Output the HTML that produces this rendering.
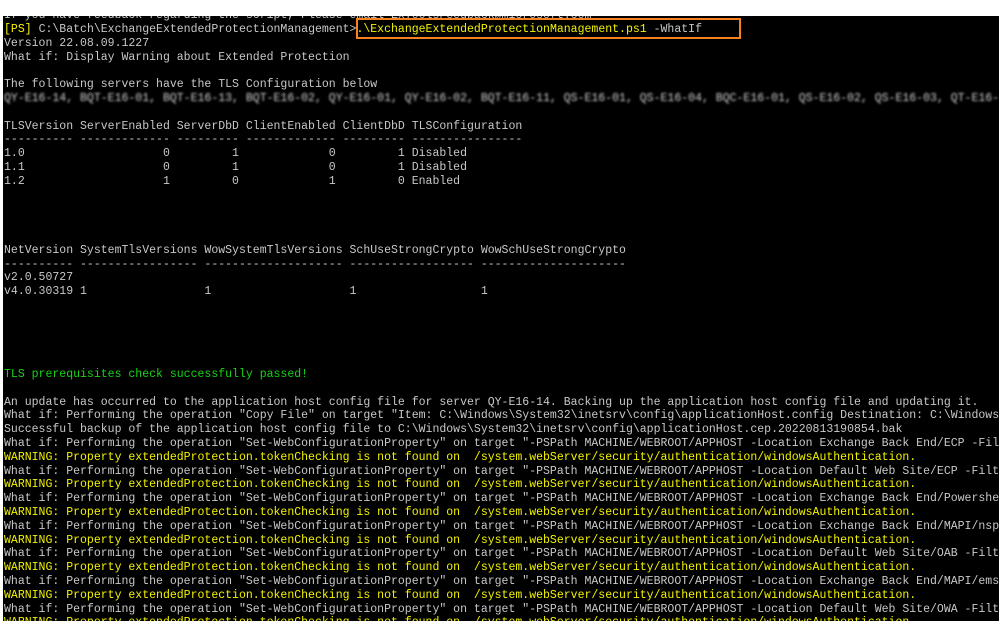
<!DOCTYPE html>
<html><head><meta charset="utf-8"><style>
html,body{margin:0;padding:0;background:#fff;width:999px;height:621px;overflow:hidden;}
#con{position:absolute;left:3px;top:16px;width:996px;height:605px;background:#000;overflow:hidden;}
pre{margin:0;position:absolute;left:1px;top:-6.7px;font-family:"Liberation Mono",monospace;font-size:11.52px;line-height:13.8px;color:#c8c8c8;white-space:pre;}
.y{color:#f2f200}.g{color:#16d416}
.b{filter:blur(1.1px);color:#d0d0d0}
#box{position:absolute;left:356px;top:18px;width:381px;height:17px;border:2px solid #f5821f;box-sizing:content-box;}
</style></head><body>
<div id="con"><pre>If you have feedback regarding the script, Please email ExToolsFeedback@microsoft.com
<span class="y">[PS]</span> C:\Batch\ExchangeExtendedProtectionManagement&gt;<span class="y">.\ExchangeExtendedProtectionManagement.ps1</span> -WhatIf
Version 22.08.09.1227
What if: Display Warning about Extended Protection

The following servers have the TLS Configuration below
<span class="b">QY-E16-14, BQT-E16-01, BQT-E16-13, BQT-E16-02, QY-E16-01, QY-E16-02, BQT-E16-11, QS-E16-01, QS-E16-04, BQC-E16-01, QS-E16-02, QS-E16-03, QT-E16-</span>

TLSVersion ServerEnabled ServerDbD ClientEnabled ClientDbD TLSConfiguration
---------- ------------- --------- ------------- --------- ----------------
1.0                    0         1             0         1 Disabled
1.1                    0         1             0         1 Disabled
1.2                    1         0             1         0 Enabled




NetVersion SystemTlsVersions WowSystemTlsVersions SchUseStrongCrypto WowSchUseStrongCrypto
---------- ----------------- -------------------- ------------------ ---------------------
v2.0.50727
v4.0.30319 1                 1                    1                  1





<span class="g">TLS prerequisites check successfully passed!</span>

An update has occurred to the application host config file for server QY-E16-14. Backing up the application host config file and updating it.
What if: Performing the operation "Copy File" on target "Item: C:\Windows\System32\inetsrv\config\applicationHost.config Destination: C:\Windows\System32
Successful backup of the application host config file to C:\Windows\System32\inetsrv\config\applicationHost.cep.20220813190854.bak
What if: Performing the operation "Set-WebConfigurationProperty" on target "-PSPath MACHINE/WEBROOT/APPHOST -Location Exchange Back End/ECP -Filter
<span class="y">WARNING: Property extendedProtection.tokenChecking is not found on  /system.webServer/security/authentication/windowsAuthentication.</span>
What if: Performing the operation "Set-WebConfigurationProperty" on target "-PSPath MACHINE/WEBROOT/APPHOST -Location Default Web Site/ECP -Filter
<span class="y">WARNING: Property extendedProtection.tokenChecking is not found on  /system.webServer/security/authentication/windowsAuthentication.</span>
What if: Performing the operation "Set-WebConfigurationProperty" on target "-PSPath MACHINE/WEBROOT/APPHOST -Location Exchange Back End/Powershell
<span class="y">WARNING: Property extendedProtection.tokenChecking is not found on  /system.webServer/security/authentication/windowsAuthentication.</span>
What if: Performing the operation "Set-WebConfigurationProperty" on target "-PSPath MACHINE/WEBROOT/APPHOST -Location Exchange Back End/MAPI/nspi -Filter
<span class="y">WARNING: Property extendedProtection.tokenChecking is not found on  /system.webServer/security/authentication/windowsAuthentication.</span>
What if: Performing the operation "Set-WebConfigurationProperty" on target "-PSPath MACHINE/WEBROOT/APPHOST -Location Default Web Site/OAB -Filter
<span class="y">WARNING: Property extendedProtection.tokenChecking is not found on  /system.webServer/security/authentication/windowsAuthentication.</span>
What if: Performing the operation "Set-WebConfigurationProperty" on target "-PSPath MACHINE/WEBROOT/APPHOST -Location Exchange Back End/MAPI/emsmdb
<span class="y">WARNING: Property extendedProtection.tokenChecking is not found on  /system.webServer/security/authentication/windowsAuthentication.</span>
What if: Performing the operation "Set-WebConfigurationProperty" on target "-PSPath MACHINE/WEBROOT/APPHOST -Location Default Web Site/OWA -Filter
<span class="y">WARNING: Property extendedProtection.tokenChecking is not found on  /system.webServer/security/authentication/windowsAuthentication.</span>
</pre></div>
<div id="box"></div>
</body></html>
